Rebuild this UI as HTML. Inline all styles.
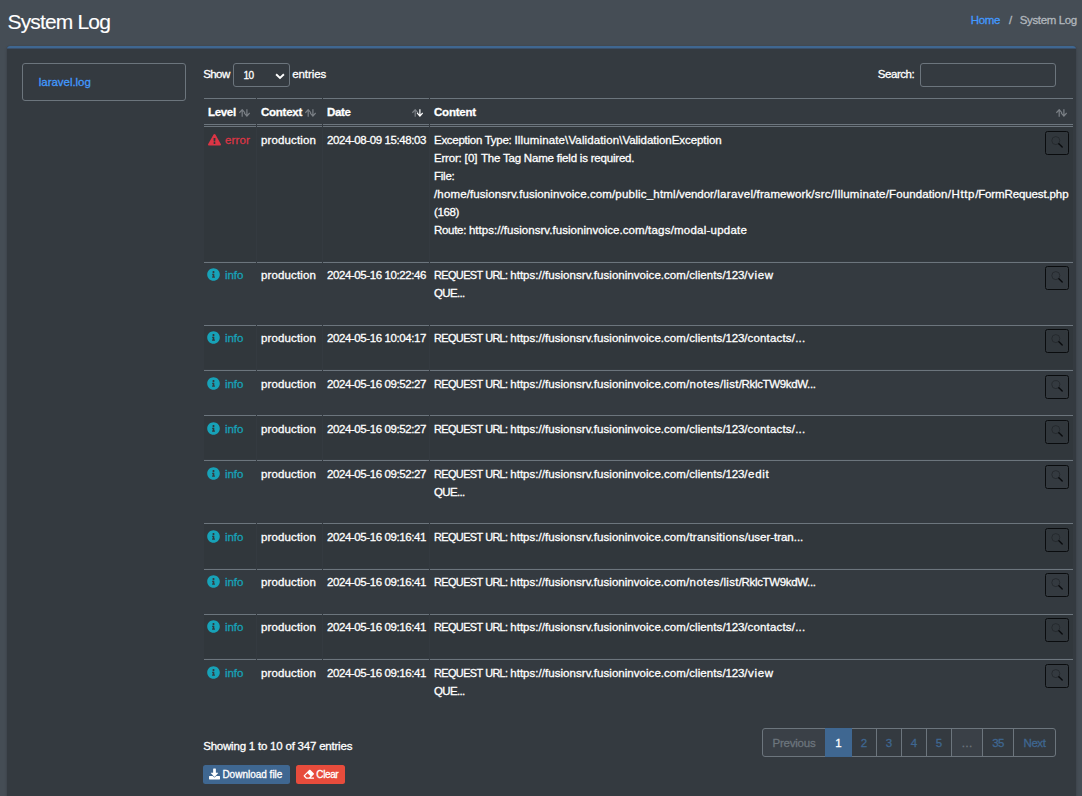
<!DOCTYPE html>
<html lang="en">
<head>
<meta charset="utf-8">
<title>System Log</title>
<style>
*{box-sizing:border-box;margin:0;padding:0}
html,body{width:1082px;height:796px;overflow:hidden}
body{background:#454d55;color:#fff;font-family:"Liberation Sans",sans-serif;font-size:11.5px;line-height:18px;position:relative;-webkit-text-stroke:0.3px currentColor}
a{color:#4299ff;text-decoration:none}
.abs{position:absolute;white-space:nowrap}
h1{position:absolute;left:7.5px;top:6.8px;-webkit-text-stroke:0.12px #fff;font-size:21px;line-height:30px;font-weight:400;color:#fff;white-space:nowrap}
.crumb{position:absolute;top:11px;height:18px;white-space:nowrap}
.card{position:absolute;left:7px;top:46px;width:1069px;height:760px;background:#343a40;border-radius:3px;box-shadow:0 0 1px rgba(0,0,0,.125),0 1px 3px rgba(0,0,0,.2);overflow:hidden}
.card:before{content:"";position:absolute;left:0;top:0;right:0;height:3px;background:linear-gradient(#3f6791 0,#3f6791 2px,#3b4f68 2px,#3b4f68 3px)}
.lg{position:absolute;left:22px;top:63px;width:164px;height:38px;border:1px solid #6c757d;border-radius:3px}
.lg a{position:absolute;left:15.8px;top:8.6px;white-space:nowrap}
.sel{position:absolute;left:233px;top:63px;width:57px;height:24px;border:1px solid #6c757d;border-radius:3px}
.sel span{position:absolute;left:9.5px;top:3.3px;font-size:10px;white-space:nowrap}
.sel svg{position:absolute;left:41.4px;top:8.8px}
.inp{position:absolute;left:920px;top:63px;width:136px;height:24px;border:1px solid #6c757d;border-radius:3px}
table{position:absolute;left:203px;top:97px;border-collapse:separate;border-spacing:1px;table-layout:fixed;width:871px}
th,td{border-top:1px solid #6c757d;padding:4px 4px 0 4px;vertical-align:top;text-align:left;white-space:nowrap;overflow:visible}
tbody tr:nth-child(odd) td{background:rgba(0,0,0,.05)}
th{font-weight:700;border-bottom:1px solid #6c757d;height:27px;position:relative;padding-top:4px}
td{position:relative}
.si{position:absolute;top:10px;width:11px;height:8px}
.err{color:#dc3545}
.inf{color:#17a2b8}
.ico{position:absolute;left:3px}
.lv{padding-left:21px}
.xb{position:absolute;left:615px;top:4px;width:24px;height:24px;border:1px solid #0a0c0e;border-radius:2.5px}
.p3 td{padding-top:3px}
.p3 .xb{top:3px}
.p3 .ico{margin-top:-1px}
.xb svg{position:absolute;left:4px;top:3px}
.pg{position:absolute;left:762px;top:728px;width:294px;height:29px}
.pg>span{position:absolute;top:0;height:29px;line-height:29px;text-align:center;border:1px solid #6c757d;color:#3f6791;font-size:11.5px;white-space:nowrap}
.pg>span.on{background:#3f6791;color:#fff;border-color:#3f6791;z-index:3}
.pg>span.dis{color:#6c757d;background:#3a4047}
.btn{position:absolute;top:765px;height:19px;border-radius:2.5px;color:#fff;font-size:10px;line-height:19px;white-space:nowrap}
.btn>span{position:absolute;top:0}
.btn svg{position:absolute}
</style>
</head>
<body>
<h1><span style="letter-spacing:-0.839px">System Log</span></h1>
<a class="crumb" style="left:970.7px" href="#"><span style="letter-spacing:-0.347px">Home</span></a>
<span class="crumb" style="left:1009px;color:#b1b7bd">/</span>
<span class="crumb" style="left:1019.8px;color:#b1b7bd"><span style="letter-spacing:-0.373px">System Log</span></span>
<div class="card"></div>
<div class="lg"><a href="#"><span style="letter-spacing:-0.038px">laravel.log</span></a></div>
<span class="abs" style="left:203.2px;top:65px"><span style="letter-spacing:-0.570px">Show</span></span>
<div class="sel"><span style="letter-spacing:-0.463px">10</span><svg width="10" height="7" viewBox="0 0 10 7"><path d="M1.1 1.3L5 5L8.9 1.3" fill="none" stroke="#fff" stroke-width="1.9"/></svg></div>
<span class="abs" style="left:292.2px;top:65px"><span style="letter-spacing:-0.076px">entries</span></span>
<span class="abs" style="left:877.8px;top:65px"><span style="letter-spacing:-0.449px">Search:</span></span>
<div class="inp"></div>
<table>
<colgroup><col style="width:52px"><col style="width:65px"><col style="width:106px"><col style="width:643px"></colgroup>
<thead><tr>
<th><span style="letter-spacing:-0.324px">Level</span><svg class="si" style="right:6.5px" viewBox="0 0 11 8"><path d="M3.2 7.7V0.9M0.4 3.8L3.2 0.7L6 3.8" fill="none" stroke="#7b8086" stroke-width="1.2"/><path d="M7.9 0.2V7M5.1 3.9L7.9 7.1L10.7 3.9" fill="none" stroke="#7b8086" stroke-width="1.2"/></svg></th>
<th><span style="letter-spacing:-0.259px">Context</span><svg class="si" style="right:6px" viewBox="0 0 11 8"><path d="M3.2 7.7V0.9M0.4 3.8L3.2 0.7L6 3.8" fill="none" stroke="#7b8086" stroke-width="1.2"/><path d="M7.9 0.2V7M5.1 3.9L7.9 7.1L10.7 3.9" fill="none" stroke="#7b8086" stroke-width="1.2"/></svg></th>
<th><span style="letter-spacing:-0.334px">Date</span><svg class="si" style="right:5.6px" viewBox="0 0 11 8"><path d="M3.2 7.7V0.9M0.4 3.8L3.2 0.7L6 3.8" fill="none" stroke="#7b8086" stroke-width="1.2"/><path d="M7.9 0.2V7M5.1 3.9L7.9 7.1L10.7 3.9" fill="none" stroke="#ffffff" stroke-width="1.2"/></svg></th>
<th><span style="letter-spacing:-0.205px">Content</span><svg class="si" style="right:6px" viewBox="0 0 11 8"><path d="M3.2 7.7V0.9M0.4 3.8L3.2 0.7L6 3.8" fill="none" stroke="#7b8086" stroke-width="1.2"/><path d="M7.9 0.2V7M5.1 3.9L7.9 7.1L10.7 3.9" fill="none" stroke="#7b8086" stroke-width="1.2"/></svg></th>
</tr></thead>
<tbody>
<tr style="height:135px"><td class="err lv"><svg class="ico" style="top:7px;left:3.5px" width="13" height="11.5" viewBox="0 0 576 512"><path fill="#dc3545" d="M569.5 440C588 472 564.8 512 527.9 512H48.1c-36.900 0-60-40.100-41.600-72L246.400 24c18.500-32 64.700-32 83.200 0l239.900 416zM288 354c-25.400 0-46 20.600-46 46s20.600 46 46 46 46-20.600 46-46-20.600-46-46-46zm-43.700-165.300l7.400 136c.3 6.400 5.600 11.300 12 11.300h48.500c6.400 0 11.600-5 12-11.300l7.400-136c.4-6.900-5.100-12.700-12-12.700h-63.400c-6.900 0-12.400 5.800-12 12.700z"/></svg><span style="letter-spacing:0.144px">error</span></td><td><span style="letter-spacing:0.128px">production</span></td><td><span style="letter-spacing:-0.410px">2024-08-09 15:48:03</span></td><td><span style="letter-spacing:-0.276px">Exception Type: </span><span style="letter-spacing:0.148px">Illuminate</span><span style="letter-spacing:0.122px">\Validation</span><span style="letter-spacing:-0.048px">\ValidationException</span><br><span style="letter-spacing:-0.193px">Error: </span><span style="letter-spacing:0.079px">[0] </span><span style="letter-spacing:-0.200px">The Tag Name field is required.</span><br><span style="letter-spacing:-0.247px">File:</span><br><span style="letter-spacing:0.146px">/home</span><span style="letter-spacing:0.080px">/fusionsrv.fusioninvoice.com</span><span style="letter-spacing:0.219px">/public_html</span><span style="letter-spacing:-0.080px">/vendor</span><span style="letter-spacing:0.315px">/laravel</span><span style="letter-spacing:0.113px">/framework</span><span style="letter-spacing:0.242px">/src</span><span style="letter-spacing:0.225px">/Illuminate</span><span style="letter-spacing:0.105px">/Foundation</span><span style="letter-spacing:0.641px">/Http</span><span style="letter-spacing:-0.122px">/FormRequest.php</span><br><span style="letter-spacing:-0.372px">(168)</span><br><span style="letter-spacing:-0.311px">Route: </span><span style="letter-spacing:0.041px">https://fusionsrv.fusioninvoice.com</span><span style="letter-spacing:0.219px">/tags/modal-update</span><div class="xb"><svg width="14" height="14" viewBox="0 0 14 14"><circle cx="5.8" cy="5.6" r="4" fill="none" stroke="#21262a" stroke-width="0.75"/><path d="M8.9 8.7L12.2 12" stroke="#0a0c0e" stroke-width="1.4" stroke-linecap="round"/></svg></div></td></tr>
<tr style="height:62px" class="p3"><td class="inf lv"><svg class="ico" style="top:6px;left:3px" width="13" height="13" viewBox="0 0 512 512"><path fill="#17a2b8" d="M256 8C119 8 8 119.100 8 256c0 137 111 248 248 248s248-111 248-248C504 119.100 393 8 256 8zm0 110c23.200 0 42 18.800 42 42s-18.800 42-42 42-42-18.800-42-42 18.800-42 42-42zm56 254c0 6.600-5.400 12-12 12h-88c-6.600 0-12-5.400-12-12v-24c0-6.600 5.400-12 12-12h12v-64h-12c-6.600 0-12-5.400-12-12v-24c0-6.600 5.400-12 12-12h64c6.600 0 12 5.400 12 12v100h12c6.600 0 12 5.400 12 12v24z"/></svg><span style="letter-spacing:-0.062px">info</span></td><td><span style="letter-spacing:0.128px">production</span></td><td><span style="letter-spacing:-0.410px">2024-05-16 10:22:46</span></td><td><span style="letter-spacing:-0.579px;font-size:10.9px">REQUEST</span><span style="letter-spacing:-0.503px"> </span><span style="letter-spacing:-0.728px;font-size:10.9px">URL:</span><span style="letter-spacing:-0.203px"> </span><span style="letter-spacing:0.041px">https://fusionsrv.fusioninvoice.com</span><span style="letter-spacing:0.088px">/clients</span><span style="letter-spacing:-0.173px">/123</span><span style="letter-spacing:0.679px">/view</span><br><span style="letter-spacing:-0.669px">QUE...</span><div class="xb"><svg width="14" height="14" viewBox="0 0 14 14"><circle cx="5.8" cy="5.6" r="4" fill="none" stroke="#21262a" stroke-width="0.75"/><path d="M8.9 8.7L12.2 12" stroke="#0a0c0e" stroke-width="1.4" stroke-linecap="round"/></svg></div></td></tr>
<tr style="height:44px" class="p3"><td class="inf lv"><svg class="ico" style="top:6px;left:3px" width="13" height="13" viewBox="0 0 512 512"><path fill="#17a2b8" d="M256 8C119 8 8 119.100 8 256c0 137 111 248 248 248s248-111 248-248C504 119.100 393 8 256 8zm0 110c23.200 0 42 18.800 42 42s-18.800 42-42 42-42-18.800-42-42 18.800-42 42-42zm56 254c0 6.600-5.400 12-12 12h-88c-6.600 0-12-5.400-12-12v-24c0-6.600 5.400-12 12-12h12v-64h-12c-6.600 0-12-5.400-12-12v-24c0-6.600 5.400-12 12-12h64c6.600 0 12 5.400 12 12v100h12c6.600 0 12 5.400 12 12v24z"/></svg><span style="letter-spacing:-0.062px">info</span></td><td><span style="letter-spacing:0.128px">production</span></td><td><span style="letter-spacing:-0.410px">2024-05-16 10:04:17</span></td><td><span style="letter-spacing:-0.579px;font-size:10.9px">REQUEST</span><span style="letter-spacing:-0.503px"> </span><span style="letter-spacing:-0.728px;font-size:10.9px">URL:</span><span style="letter-spacing:-0.203px"> </span><span style="letter-spacing:0.041px">https://fusionsrv.fusioninvoice.com</span><span style="letter-spacing:0.088px">/clients</span><span style="letter-spacing:-0.173px">/123</span><span style="letter-spacing:0.184px">/contacts/...</span><div class="xb"><svg width="14" height="14" viewBox="0 0 14 14"><circle cx="5.8" cy="5.6" r="4" fill="none" stroke="#21262a" stroke-width="0.75"/><path d="M8.9 8.7L12.2 12" stroke="#0a0c0e" stroke-width="1.4" stroke-linecap="round"/></svg></div></td></tr>
<tr style="height:44px"><td class="inf lv"><svg class="ico" style="top:6px;left:3px" width="13" height="13" viewBox="0 0 512 512"><path fill="#17a2b8" d="M256 8C119 8 8 119.100 8 256c0 137 111 248 248 248s248-111 248-248C504 119.100 393 8 256 8zm0 110c23.200 0 42 18.800 42 42s-18.800 42-42 42-42-18.800-42-42 18.800-42 42-42zm56 254c0 6.600-5.400 12-12 12h-88c-6.600 0-12-5.400-12-12v-24c0-6.600 5.400-12 12-12h12v-64h-12c-6.600 0-12-5.400-12-12v-24c0-6.600 5.400-12 12-12h64c6.600 0 12 5.400 12 12v100h12c6.600 0 12 5.400 12 12v24z"/></svg><span style="letter-spacing:-0.062px">info</span></td><td><span style="letter-spacing:0.128px">production</span></td><td><span style="letter-spacing:-0.410px">2024-05-16 09:52:27</span></td><td><span style="letter-spacing:-0.579px;font-size:10.9px">REQUEST</span><span style="letter-spacing:-0.503px"> </span><span style="letter-spacing:-0.728px;font-size:10.9px">URL:</span><span style="letter-spacing:-0.203px"> </span><span style="letter-spacing:0.041px">https://fusionsrv.fusioninvoice.com</span><span style="letter-spacing:0.462px">/notes</span><span style="letter-spacing:0.290px">/list</span><span style="letter-spacing:-0.349px">/RklcTW9kdW...</span><div class="xb"><svg width="14" height="14" viewBox="0 0 14 14"><circle cx="5.8" cy="5.6" r="4" fill="none" stroke="#21262a" stroke-width="0.75"/><path d="M8.9 8.7L12.2 12" stroke="#0a0c0e" stroke-width="1.4" stroke-linecap="round"/></svg></div></td></tr>
<tr style="height:44px"><td class="inf lv"><svg class="ico" style="top:6px;left:3px" width="13" height="13" viewBox="0 0 512 512"><path fill="#17a2b8" d="M256 8C119 8 8 119.100 8 256c0 137 111 248 248 248s248-111 248-248C504 119.100 393 8 256 8zm0 110c23.200 0 42 18.800 42 42s-18.800 42-42 42-42-18.800-42-42 18.800-42 42-42zm56 254c0 6.600-5.400 12-12 12h-88c-6.600 0-12-5.400-12-12v-24c0-6.600 5.400-12 12-12h12v-64h-12c-6.600 0-12-5.400-12-12v-24c0-6.600 5.400-12 12-12h64c6.600 0 12 5.400 12 12v100h12c6.600 0 12 5.400 12 12v24z"/></svg><span style="letter-spacing:-0.062px">info</span></td><td><span style="letter-spacing:0.128px">production</span></td><td><span style="letter-spacing:-0.410px">2024-05-16 09:52:27</span></td><td><span style="letter-spacing:-0.579px;font-size:10.9px">REQUEST</span><span style="letter-spacing:-0.503px"> </span><span style="letter-spacing:-0.728px;font-size:10.9px">URL:</span><span style="letter-spacing:-0.203px"> </span><span style="letter-spacing:0.041px">https://fusionsrv.fusioninvoice.com</span><span style="letter-spacing:0.088px">/clients</span><span style="letter-spacing:-0.173px">/123</span><span style="letter-spacing:0.184px">/contacts/...</span><div class="xb"><svg width="14" height="14" viewBox="0 0 14 14"><circle cx="5.8" cy="5.6" r="4" fill="none" stroke="#21262a" stroke-width="0.75"/><path d="M8.9 8.7L12.2 12" stroke="#0a0c0e" stroke-width="1.4" stroke-linecap="round"/></svg></div></td></tr>
<tr style="height:62px"><td class="inf lv"><svg class="ico" style="top:6px;left:3px" width="13" height="13" viewBox="0 0 512 512"><path fill="#17a2b8" d="M256 8C119 8 8 119.100 8 256c0 137 111 248 248 248s248-111 248-248C504 119.100 393 8 256 8zm0 110c23.200 0 42 18.800 42 42s-18.800 42-42 42-42-18.800-42-42 18.800-42 42-42zm56 254c0 6.600-5.400 12-12 12h-88c-6.600 0-12-5.400-12-12v-24c0-6.600 5.400-12 12-12h12v-64h-12c-6.600 0-12-5.400-12-12v-24c0-6.600 5.400-12 12-12h64c6.600 0 12 5.400 12 12v100h12c6.600 0 12 5.400 12 12v24z"/></svg><span style="letter-spacing:-0.062px">info</span></td><td><span style="letter-spacing:0.128px">production</span></td><td><span style="letter-spacing:-0.410px">2024-05-16 09:52:27</span></td><td><span style="letter-spacing:-0.579px;font-size:10.9px">REQUEST</span><span style="letter-spacing:-0.503px"> </span><span style="letter-spacing:-0.728px;font-size:10.9px">URL:</span><span style="letter-spacing:-0.203px"> </span><span style="letter-spacing:0.041px">https://fusionsrv.fusioninvoice.com</span><span style="letter-spacing:0.088px">/clients</span><span style="letter-spacing:-0.173px">/123</span><span style="letter-spacing:0.710px">/edit</span><br><span style="letter-spacing:-0.669px">QUE...</span><div class="xb"><svg width="14" height="14" viewBox="0 0 14 14"><circle cx="5.8" cy="5.6" r="4" fill="none" stroke="#21262a" stroke-width="0.75"/><path d="M8.9 8.7L12.2 12" stroke="#0a0c0e" stroke-width="1.4" stroke-linecap="round"/></svg></div></td></tr>
<tr style="height:45px"><td class="inf lv"><svg class="ico" style="top:6px;left:3px" width="13" height="13" viewBox="0 0 512 512"><path fill="#17a2b8" d="M256 8C119 8 8 119.100 8 256c0 137 111 248 248 248s248-111 248-248C504 119.100 393 8 256 8zm0 110c23.200 0 42 18.800 42 42s-18.800 42-42 42-42-18.800-42-42 18.800-42 42-42zm56 254c0 6.600-5.400 12-12 12h-88c-6.600 0-12-5.400-12-12v-24c0-6.600 5.400-12 12-12h12v-64h-12c-6.600 0-12-5.400-12-12v-24c0-6.600 5.400-12 12-12h64c6.600 0 12 5.400 12 12v100h12c6.600 0 12 5.400 12 12v24z"/></svg><span style="letter-spacing:-0.062px">info</span></td><td><span style="letter-spacing:0.128px">production</span></td><td><span style="letter-spacing:-0.410px">2024-05-16 09:16:41</span></td><td><span style="letter-spacing:-0.579px;font-size:10.9px">REQUEST</span><span style="letter-spacing:-0.503px"> </span><span style="letter-spacing:-0.728px;font-size:10.9px">URL:</span><span style="letter-spacing:-0.203px"> </span><span style="letter-spacing:0.041px">https://fusionsrv.fusioninvoice.com</span><span style="letter-spacing:0.266px">/transitions</span><span style="letter-spacing:-0.024px">/user-tran...</span><div class="xb"><svg width="14" height="14" viewBox="0 0 14 14"><circle cx="5.8" cy="5.6" r="4" fill="none" stroke="#21262a" stroke-width="0.75"/><path d="M8.9 8.7L12.2 12" stroke="#0a0c0e" stroke-width="1.4" stroke-linecap="round"/></svg></div></td></tr>
<tr style="height:44px" class="p3"><td class="inf lv"><svg class="ico" style="top:6px;left:3px" width="13" height="13" viewBox="0 0 512 512"><path fill="#17a2b8" d="M256 8C119 8 8 119.100 8 256c0 137 111 248 248 248s248-111 248-248C504 119.100 393 8 256 8zm0 110c23.200 0 42 18.800 42 42s-18.800 42-42 42-42-18.800-42-42 18.800-42 42-42zm56 254c0 6.600-5.400 12-12 12h-88c-6.600 0-12-5.400-12-12v-24c0-6.600 5.400-12 12-12h12v-64h-12c-6.600 0-12-5.400-12-12v-24c0-6.600 5.400-12 12-12h64c6.600 0 12 5.400 12 12v100h12c6.600 0 12 5.400 12 12v24z"/></svg><span style="letter-spacing:-0.062px">info</span></td><td><span style="letter-spacing:0.128px">production</span></td><td><span style="letter-spacing:-0.410px">2024-05-16 09:16:41</span></td><td><span style="letter-spacing:-0.579px;font-size:10.9px">REQUEST</span><span style="letter-spacing:-0.503px"> </span><span style="letter-spacing:-0.728px;font-size:10.9px">URL:</span><span style="letter-spacing:-0.203px"> </span><span style="letter-spacing:0.041px">https://fusionsrv.fusioninvoice.com</span><span style="letter-spacing:0.462px">/notes</span><span style="letter-spacing:0.290px">/list</span><span style="letter-spacing:-0.349px">/RklcTW9kdW...</span><div class="xb"><svg width="14" height="14" viewBox="0 0 14 14"><circle cx="5.8" cy="5.6" r="4" fill="none" stroke="#21262a" stroke-width="0.75"/><path d="M8.9 8.7L12.2 12" stroke="#0a0c0e" stroke-width="1.4" stroke-linecap="round"/></svg></div></td></tr>
<tr style="height:44px" class="p3"><td class="inf lv"><svg class="ico" style="top:6px;left:3px" width="13" height="13" viewBox="0 0 512 512"><path fill="#17a2b8" d="M256 8C119 8 8 119.100 8 256c0 137 111 248 248 248s248-111 248-248C504 119.100 393 8 256 8zm0 110c23.200 0 42 18.800 42 42s-18.800 42-42 42-42-18.800-42-42 18.800-42 42-42zm56 254c0 6.600-5.400 12-12 12h-88c-6.600 0-12-5.400-12-12v-24c0-6.600 5.400-12 12-12h12v-64h-12c-6.600 0-12-5.400-12-12v-24c0-6.600 5.400-12 12-12h64c6.600 0 12 5.400 12 12v100h12c6.600 0 12 5.400 12 12v24z"/></svg><span style="letter-spacing:-0.062px">info</span></td><td><span style="letter-spacing:0.128px">production</span></td><td><span style="letter-spacing:-0.410px">2024-05-16 09:16:41</span></td><td><span style="letter-spacing:-0.579px;font-size:10.9px">REQUEST</span><span style="letter-spacing:-0.503px"> </span><span style="letter-spacing:-0.728px;font-size:10.9px">URL:</span><span style="letter-spacing:-0.203px"> </span><span style="letter-spacing:0.041px">https://fusionsrv.fusioninvoice.com</span><span style="letter-spacing:0.088px">/clients</span><span style="letter-spacing:-0.173px">/123</span><span style="letter-spacing:0.184px">/contacts/...</span><div class="xb"><svg width="14" height="14" viewBox="0 0 14 14"><circle cx="5.8" cy="5.6" r="4" fill="none" stroke="#21262a" stroke-width="0.75"/><path d="M8.9 8.7L12.2 12" stroke="#0a0c0e" stroke-width="1.4" stroke-linecap="round"/></svg></div></td></tr>
<tr style="height:62px"><td class="inf lv"><svg class="ico" style="top:6px;left:3px" width="13" height="13" viewBox="0 0 512 512"><path fill="#17a2b8" d="M256 8C119 8 8 119.100 8 256c0 137 111 248 248 248s248-111 248-248C504 119.100 393 8 256 8zm0 110c23.200 0 42 18.800 42 42s-18.800 42-42 42-42-18.800-42-42 18.800-42 42-42zm56 254c0 6.600-5.400 12-12 12h-88c-6.600 0-12-5.400-12-12v-24c0-6.600 5.400-12 12-12h12v-64h-12c-6.600 0-12-5.400-12-12v-24c0-6.600 5.400-12 12-12h64c6.600 0 12 5.400 12 12v100h12c6.600 0 12 5.400 12 12v24z"/></svg><span style="letter-spacing:-0.062px">info</span></td><td><span style="letter-spacing:0.128px">production</span></td><td><span style="letter-spacing:-0.410px">2024-05-16 09:16:41</span></td><td><span style="letter-spacing:-0.579px;font-size:10.9px">REQUEST</span><span style="letter-spacing:-0.503px"> </span><span style="letter-spacing:-0.728px;font-size:10.9px">URL:</span><span style="letter-spacing:-0.203px"> </span><span style="letter-spacing:0.041px">https://fusionsrv.fusioninvoice.com</span><span style="letter-spacing:0.088px">/clients</span><span style="letter-spacing:-0.173px">/123</span><span style="letter-spacing:0.679px">/view</span><br><span style="letter-spacing:-0.669px">QUE...</span><div class="xb"><svg width="14" height="14" viewBox="0 0 14 14"><circle cx="5.8" cy="5.6" r="4" fill="none" stroke="#21262a" stroke-width="0.75"/><path d="M8.9 8.7L12.2 12" stroke="#0a0c0e" stroke-width="1.4" stroke-linecap="round"/></svg></div></td></tr>
</tbody>
</table>
<span class="abs" style="left:203.2px;top:737px"><span style="letter-spacing:-0.212px">Showing 1 to 10 of 347 entries</span></span>
<div class="pg"><span class="dis" style="left:0px;width:64px;border-radius:3px 0 0 3px"><span style="letter-spacing:-0.219px">Previous</span></span><span class="on" style="left:63px;width:27px">1</span><span class="" style="left:89px;width:26px">2</span><span class="" style="left:114px;width:26px">3</span><span class="" style="left:139px;width:26px">4</span><span class="" style="left:164px;width:26px">5</span><span class="dis" style="left:189px;width:32px">…</span><span class="" style="left:220px;width:32px"><span style="letter-spacing:-0.698px">35</span></span><span class="" style="left:251px;width:43px;border-radius:0 3px 3px 0"><span style="letter-spacing:-0.414px">Next</span></span></div>
<a class="btn" style="left:203px;width:87px;background:#3f6791" href="#"><svg style="left:6.2px;top:2.8px" width="11" height="12" viewBox="0 0 512 512"><path fill="#fff" d="M216 0h80c13.300 0 24 10.700 24 24v168h87.700c17.800 0 26.700 21.500 14.100 34.100L269.700 378.300c-7.500 7.500-19.800 7.500-27.300 0L90.100 226.100c-12.600-12.600-3.700-34.100 14.100-34.100H192V24c0-13.300 10.700-24 24-24zm296 376v112c0 13.300-10.700 24-24 24H24c-13.300 0-24-10.700-24-24V376c0-13.300 10.700-24 24-24h146.700l49 49c20.100 20.100 52.500 20.100 72.600 0l49-49H488c13.300 0 24 10.700 24 24z"/></svg><span style="left:19.4px"><span style="letter-spacing:-0.004px">Download file</span></span></a>
<a class="btn" style="left:296px;width:49px;background:#e74c3c" href="#"><svg style="left:6.6px;top:4.2px" width="11.6" height="10.4" viewBox="0 0 512 512"><path fill="#fff" d="M497.900 273.900c18.700-18.700 18.700-49.100 0-67.900l-160-160c-18.700-18.700-49.100-18.700-67.900 0l-256 256c-18.700 18.700-18.700 49.100 0 67.900l96 96A48 48 0 0 0 144 480h356c6.600 0 12-5.400 12-12v-40c0-6.600-5.400-12-12-12H355.900l142.100-142.100zm-302.600-62.600l137.400 137.400L265.400 416H150.600l-80-80 124.700-124.700z"/></svg><span style="left:20.3px"><span style="letter-spacing:-0.381px">Clear</span></span></a>
</body>
</html>
